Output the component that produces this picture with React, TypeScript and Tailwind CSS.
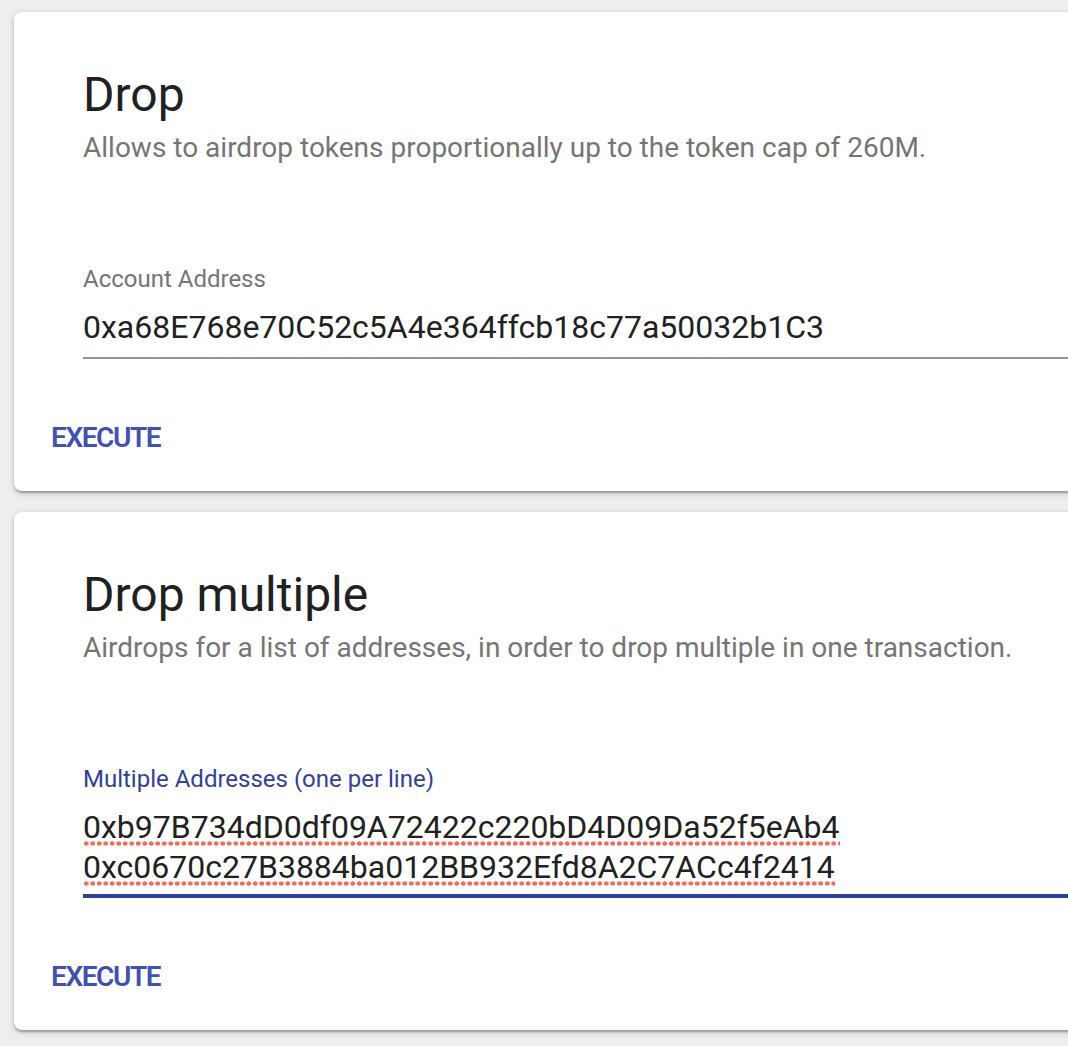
import React from "react";

const ADDRESS = "0xa68E768e70C52c5A4e364ffcb18c77a50032b1C3";
const MULTI = [
  "0xb97B734dD0df09A72422c220bD4D09Da52f5eAb4",
  "0xc0670c27B3884ba012BB932Efd8A2C7ACc4f2414",
];

function Card({
  title,
  subtitle,
  children,
}: {
  title: string;
  subtitle: string;
  children: React.ReactNode;
}) {
  return (
    <div className="w-[1100px] rounded-lg bg-white shadow-[0_2px_6px_rgba(0,0,0,0.2),0_2px_2px_rgba(0,0,0,0.14),0_4px_2px_-2px_rgba(0,0,0,0.12)]">
      <div className="pt-[55px] pl-[69px]">
        <h2 className="text-[48px] leading-[56px] font-normal text-[#212121]">{title}</h2>
        <p className="mt-[9px] text-[28px] leading-[32px] text-[#757575]">{subtitle}</p>
      </div>
      {children}
      <div className="pl-[37px] pb-[37px]">
        <button
          type="button"
          className="text-[28px] leading-[32px] font-semibold tracking-[-1.4px] text-[#3f51b5] uppercase"
        >
          Execute
        </button>
      </div>
    </div>
  );
}

export default function App() {
  return (
    <div
      className="min-h-[1046px] overflow-hidden bg-[#eeeeee] pt-[12px] pl-[14px]"
      style={{ fontFamily: "Roboto, 'Liberation Sans', sans-serif" }}
    >
      <div className="flex flex-col gap-[21px]">
        <Card
          title="Drop"
          subtitle="Allows to airdrop tokens proportionally up to the token cap of 260M."
        >
          <div className="mt-[101px] ml-[69px] mb-[63px]">
            <label className="block text-[24px] leading-[28px] text-[#757575]">
              Account Address
            </label>
            <div className="mt-[15px] border-b-2 border-[#959595] pb-[11px] text-[32px] leading-[38px] text-[#212121]">
              {ADDRESS}
            </div>
          </div>
        </Card>
        <Card
          title="Drop multiple"
          subtitle="Airdrops for a list of addresses, in order to drop multiple in one transaction."
        >
          <div className="mt-[101px] ml-[69px] mb-[63px]">
            <label className="block text-[24px] leading-[28px] text-[#303f9f]">
              Multiple Addresses (one per line)
            </label>
            <div className="mt-[14px] border-b-4 border-[#303f9f] pb-[7px] text-[32px] leading-[40px] text-[#212121]">
              {MULTI.map((a) => (
                <div key={a}>
                  {/* spellcheck squiggle */}
                  <span className="bg-[radial-gradient(circle,#f26b5b_2.1px,transparent_2.6px)] bg-[length:6.5px_5.5px] bg-repeat-x bg-[position:left_bottom]">
                    {a}
                  </span>
                </div>
              ))}
            </div>
          </div>
        </Card>
      </div>
    </div>
  );
}
